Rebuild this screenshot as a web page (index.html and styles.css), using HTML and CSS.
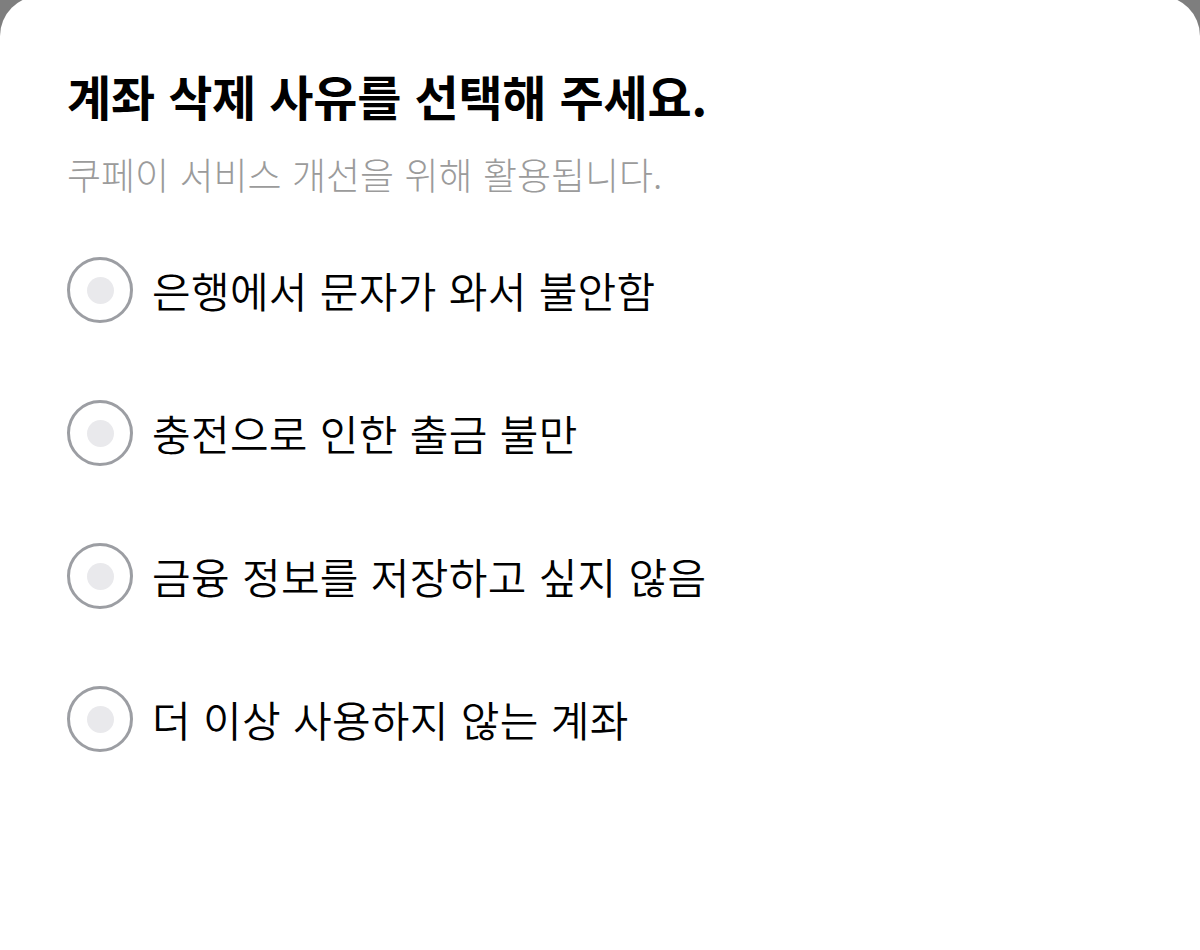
FILE: index.html
```html
<!DOCTYPE html>
<html lang="ko">
<head>
<meta charset="utf-8">
<link rel="stylesheet" href="styles.css">
</head>
<body>
<main class="sheet">
  <h1 class="title">계좌 삭제 사유를 선택해 주세요.</h1>
  <p class="subtitle">쿠페이 서비스 개선을 위해 활용됩니다.</p>
  <ul class="options">
    <li class="option"><span class="radio"><span class="dot"></span></span><span class="label">은행에서 문자가 와서 불안함</span></li>
    <li class="option"><span class="radio"><span class="dot"></span></span><span class="label">충전으로 인한 출금 불만</span></li>
    <li class="option"><span class="radio"><span class="dot"></span></span><span class="label">금융 정보를 저장하고 싶지 않음</span></li>
    <li class="option"><span class="radio"><span class="dot"></span></span><span class="label">더 이상 사용하지 않는 계좌</span></li>
  </ul>
</main>
</body>
</html>
```

FILE: styles.css
```css
* { box-sizing: border-box; }
html, body {
  margin: 0;
  padding: 0;
  height: 100%;
}
body {
  background: #7e7e7e;
  font-family: "Noto Sans CJK KR", "Noto Sans", sans-serif;
  color: #111;
  overflow: hidden;
}
.sheet {
  background: #fff;
  border-radius: 40px 40px 0 0;
  margin-top: -4px;
  min-height: 960px;
  padding: 67px 67px 0 67px;
}
.title {
  margin: 0;
  font-size: 48px;
  font-weight: 700;
  line-height: 64px;
  color: #000;
  letter-spacing: -0.2px;
}
.subtitle {
  margin: 25px 0 0 0;
  font-size: 37px;
  font-weight: 300;
  line-height: 44px;
  color: #9b9b9b;
  letter-spacing: 0;
}
.options {
  list-style: none;
  margin: 61px 0 0 0;
  padding: 0;
  display: flex;
  flex-direction: column;
  gap: 77px;
}
.option {
  display: flex;
  align-items: center;
  gap: 19px;
  height: 66px;
}
.radio {
  width: 66px;
  height: 66px;
  border-radius: 50%;
  border: 3px solid #9c9ea3;
  display: flex;
  align-items: center;
  justify-content: center;
  flex: none;
}
.dot {
  width: 27px;
  height: 27px;
  border-radius: 50%;
  background: #e9e9ec;
}
.label {
  font-size: 42px;
  font-weight: 350;
  line-height: 56px;
  color: #000;
  letter-spacing: 0.3px;
}
```
